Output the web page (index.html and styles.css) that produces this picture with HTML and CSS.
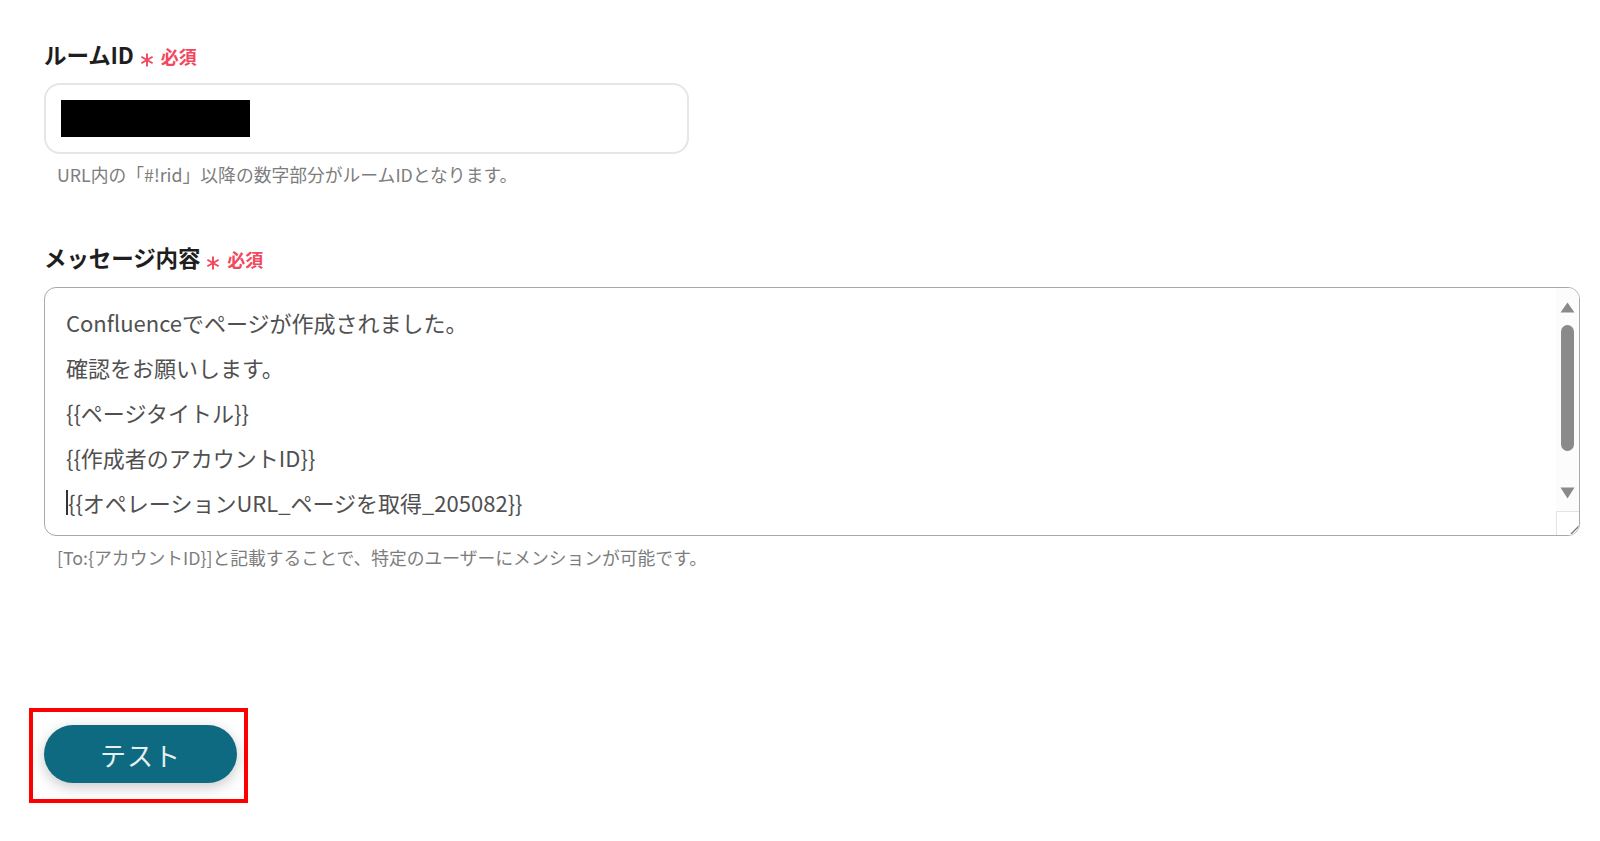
FILE: index.html
```html
<!DOCTYPE html>
<html lang="ja">
<head>
<meta charset="utf-8">
<title>Chatwork</title>
<link rel="stylesheet" href="styles.css">
</head>
<body>
<main class="form">
  <section class="field field-room">
    <div class="label">ルームID<span class="req"><svg class="ast" width="14" height="14" viewBox="0 0 14 14"><path d="M7 0.5 V13.5 M1.4 3.75 L12.6 10.25 M1.4 10.25 L12.6 3.75" stroke="#f2475e" stroke-width="1.9"/></svg>必須</span></div>
    <div class="input"><span class="mask"></span></div>
    <div class="help">URL内の「#!rid」以降の数字部分がルームIDとなります。</div>
  </section>

  <section class="field field-msg">
    <div class="label">メッセージ内容<span class="req"><svg class="ast" width="14" height="14" viewBox="0 0 14 14"><path d="M7 0.5 V13.5 M1.4 3.75 L12.6 10.25 M1.4 10.25 L12.6 3.75" stroke="#f2475e" stroke-width="1.9"/></svg>必須</span></div>
    <div class="textarea">
      <div class="ta-content">
        <div class="line">Confluenceでページが作成されました。</div>
        <div class="line">確認をお願いします。</div>
        <div class="line">{{ページタイトル}}</div>
        <div class="line">{{作成者のアカウントID}}</div>
        <div class="line"><span class="caret"></span>{{オペレーションURL_ページを取得_205082}}</div>
      </div>
      <div class="scrollbar">
        <svg class="arrow up" width="15" height="11" viewBox="0 0 15 11"><path d="M7.5 0.5 L14.5 10.5 L0.5 10.5 Z" fill="#8a8a8a"/></svg>
        <div class="thumb"></div>
        <svg class="arrow down" width="15" height="12" viewBox="0 0 15 12"><path d="M0.5 0.5 L14.5 0.5 L7.5 11.5 Z" fill="#8a8a8a"/></svg>
        <div class="corner"><svg width="12" height="12" viewBox="0 0 12 12"><path d="M11 3 L3 11 M11 7 L7 11" stroke="#777" stroke-width="1.3"/></svg></div>
      </div>
    </div>
    <div class="help help-2">[To:{アカウントID}]と記載することで、特定のユーザーにメンションが可能です。</div>
  </section>

  <div class="highlight">
    <button class="btn">テスト</button>
  </div>
</main>
</body>
</html>
```

FILE: styles.css
```css
* { box-sizing: border-box; }
html, body { margin: 0; padding: 0; background: #fff; }
body {
  font-family: "Noto Sans CJK JP", "Noto Sans", sans-serif;
  color: #222;
}
.form {
  padding: 39px 20px 0 44px;
  display: flex;
  flex-direction: column;
  align-items: flex-start;
}
.field { width: 100%; display: flex; flex-direction: column; align-items: flex-start; }
.label {
  font-size: 22.5px;
  font-weight: 700;
  line-height: 30px;
  height: 30px;
  color: #1e1e1e;
  letter-spacing: -0.1px;
  display: flex;
  align-items: center;
}
.req {
  color: #f2475e;
  font-size: 18px;
  font-weight: 700;
  margin-left: 6px;
  display: inline-flex;
  align-items: center;
  padding-top: 3px;
  letter-spacing: 0;
}
.ast { display: block; margin-right: 7px; margin-top: 9px; }
.input {
  margin-top: 14px;
  width: 645px;
  height: 71px;
  border: 2px solid #e3e6ea;
  border-radius: 16px;
  display: flex;
  align-items: center;
  padding-left: 15px;
}
.mask { display: block; width: 189px; height: 37px; background: #000; }
.help {
  font-size: 17.8px;
  color: #7d7d7d;
  margin: 8px 0 0 13px;
  line-height: 24px;
  height: 24px;
}
.field-msg { margin-top: 56px; }
.textarea {
  margin-top: 15px;
  width: 1536px;
  height: 249px;
  border: 1.5px solid #a9a9a9;
  border-radius: 12px;
  display: flex;
  overflow: hidden;
}
.ta-content {
  flex: 1;
  padding: 12px 0 0 21px;
  font-size: 22px;
  color: #505050;
}
.line { line-height: 45px; height: 45px; white-space: nowrap; display: flex; align-items: center; }
.caret { display: inline-block; width: 2px; height: 25px; background: #333; }
.scrollbar {
  width: 23px;
  display: flex;
  flex-direction: column;
  align-items: center;
  background: #fcfcfc;
}
.arrow { display: block; flex: none; }
.arrow.up { margin-top: 13.5px; }
.thumb { flex: none; margin-top: 12px; width: 13px; height: 126px; border-radius: 7px; background: #8a8a8a; }
.arrow.down { margin-top: 36px; }
.corner {
  margin-top: auto;
  width: 24px;
  height: 24px;
  border-top: 1px solid #e3e3e3;
  border-left: 1px solid #e3e3e3;
  display: flex;
  align-items: flex-end;
  justify-content: flex-end;
  background: #fff;
}
.help-2 { margin-top: 9px; }
.highlight {
  margin-top: 139px;
  margin-left: -15px;
  border: 4px solid #f00;
  padding: 13px 7px 16px 11px;
}
.btn {
  display: block;
  width: 193px;
  height: 58px;
  border: none;
  border-radius: 29px;
  background: #0e6a80;
  color: #e6f0f2;
  font-family: "Noto Sans CJK JP", sans-serif;
  font-size: 26px;
  letter-spacing: 1px;
  box-shadow: 0 4px 14px rgba(0, 0, 0, 0.22);
  padding: 0;
}
```
